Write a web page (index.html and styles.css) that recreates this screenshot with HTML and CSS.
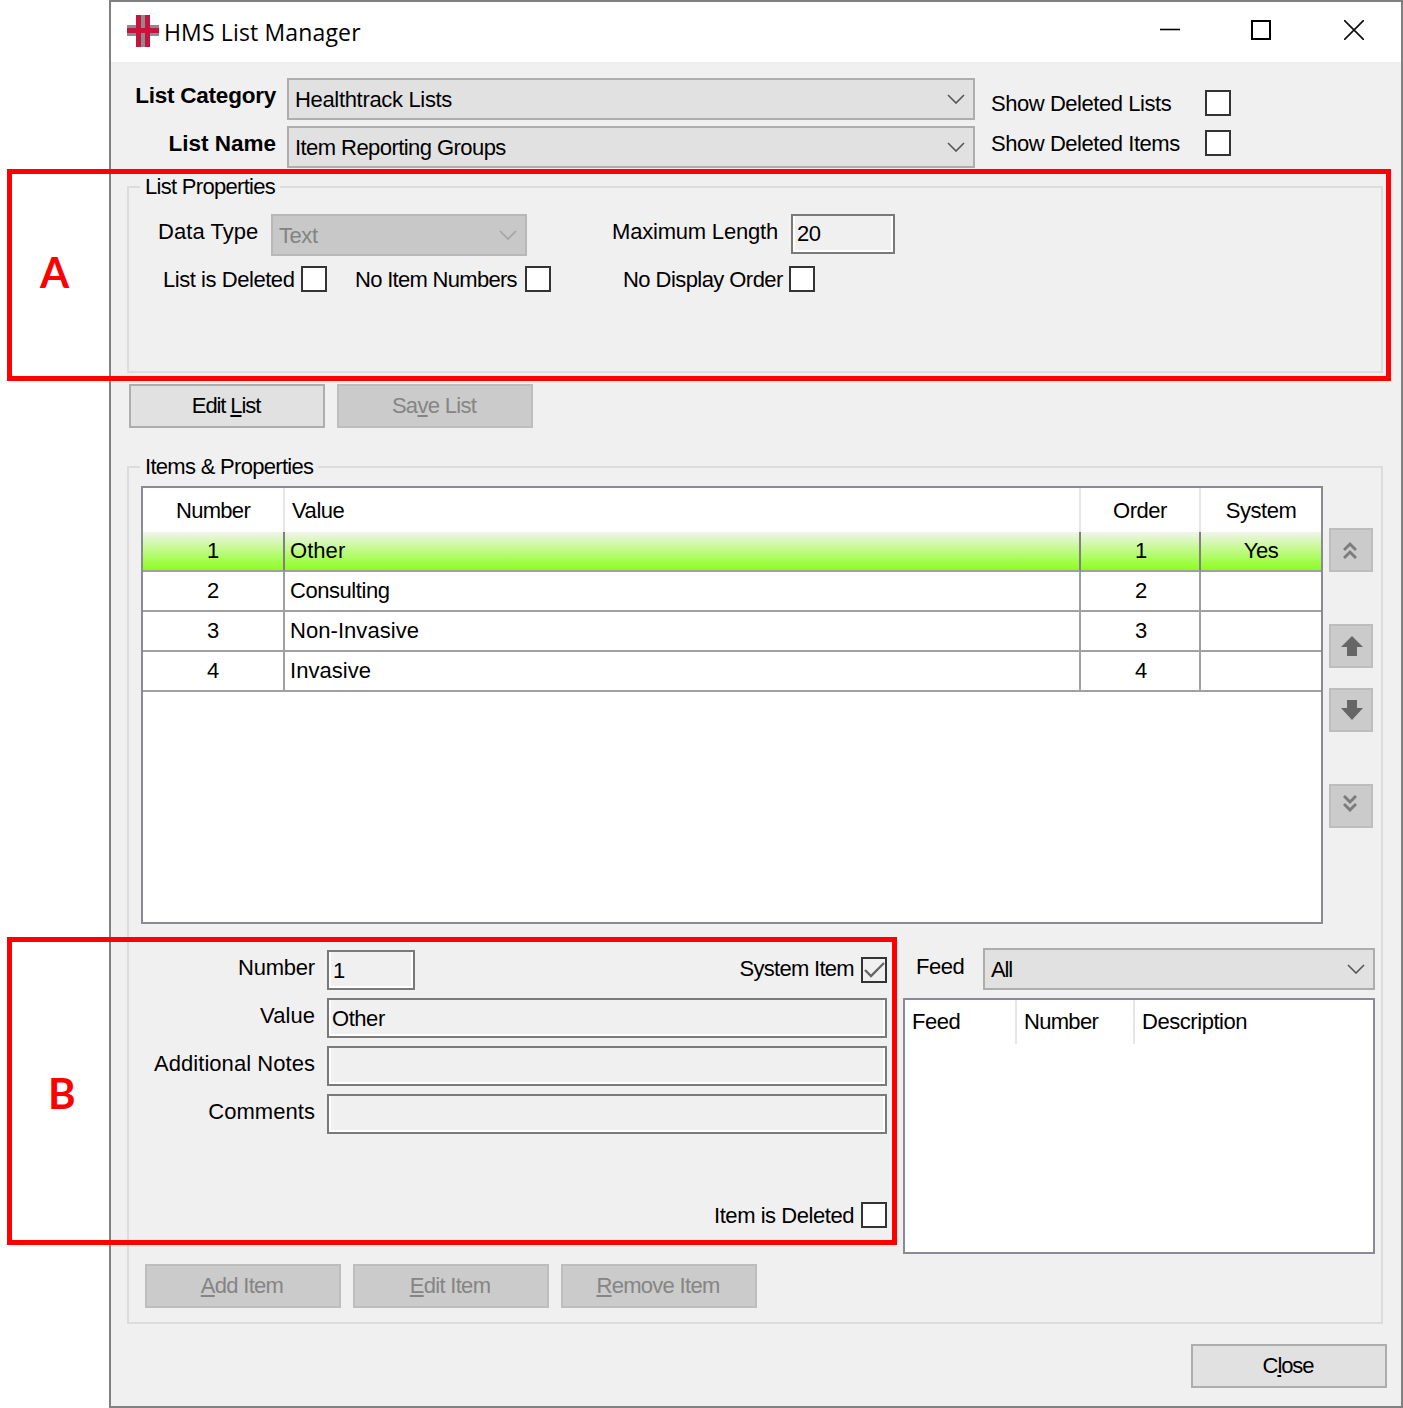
FILE: index.html
```html
<!DOCTYPE html>
<html lang="en">
<head>
<meta charset="utf-8">
<title>HMS List Manager</title>
<link rel="stylesheet" href="styles.css">
</head>
<body>
<div class="window">
  <header class="titlebar">
    <svg class="logo" width="32" height="32" viewBox="0 0 32 32"><path fill="#8c8c8c" d="M9 0h14v32H9zM0 10h32v11H0z"/><path fill="#c8143c" d="M9 0h5v32H9zM18 0h5v32h-5zM0 13h32v5H0z"/></svg>
    <span class="title">HMS List Manager</span>
    <div class="winctl">
      <svg width="20" height="20" viewBox="0 0 20 20"><path d="M0 9.5h20" stroke="#000" stroke-width="1.6" fill="none"/></svg>
      <svg width="20" height="20" viewBox="0 0 20 20"><path d="M1 1h18v18H1z" stroke="#000" stroke-width="2" fill="none"/></svg>
      <svg class="wc-close" width="20" height="20" viewBox="0 0 20 20"><path d="M0 0l20 20M20 0L0 20" stroke="#111" stroke-width="1.7" fill="none"/></svg>
    </div>
  </header>
  <main class="content">
    <section class="top">
      <div class="selectors">
        <label class="lbl-bold">List Category</label>
        <div class="combo"><span class="ls-soft">Healthtrack Lists</span><svg class="chev" width="18" height="10" viewBox="0 0 18 10"><path d="M1 1l8 8 8-8" fill="none" stroke="#555" stroke-width="1.6"/></svg></div>
        <label class="lbl-bold lbl-name">List Name</label>
        <div class="combo"><span class="ls-snug">Item Reporting Groups</span><svg class="chev" width="18" height="10" viewBox="0 0 18 10"><path d="M1 1l8 8 8-8" fill="none" stroke="#555" stroke-width="1.6"/></svg></div>
      </div>
      <div class="showopts">
        <div class="showrow"><span>Show Deleted Lists</span><i class="check"></i></div>
        <div class="showrow"><span>Show Deleted Items</span><i class="check"></i></div>
      </div>
    </section>

    <section class="group group-list">
      <span class="legend ls-tight">List Properties</span>
      <div class="prop-row">
        <span class="w-type ls-wide">Data Type</span>
        <div class="combo combo-off"><span>Text</span><svg class="chev" width="18" height="10" viewBox="0 0 18 10"><path d="M1 1l8 8 8-8" fill="none" stroke="#a4a4a4" stroke-width="1.6"/></svg></div>
        <span class="w-max ls-mid">Maximum Length</span>
        <div class="input input-max">20</div>
      </div>
      <div class="prop-row prop-row2">
        <span class="w-del">List is Deleted</span><i class="check"></i>
        <span class="w-noitem ls-tight">No Item Numbers</span><i class="check"></i>
        <span class="w-noorder ls-snug">No Display Order</span><i class="check"></i>
      </div>
    </section>

    <div class="btnrow btnrow-list">
      <button class="btn ls-xtight" type="button">Edit <u>L</u>ist</button>
      <button class="btn btn-off ls-tight" type="button">Sa<u>v</u>e List</button>
    </div>

    <section class="group group-items">
      <span class="legend ls-tight">Items &amp; Properties</span>
      <div class="grid-area">
        <div class="tablebox">
          <table class="items">
            <colgroup><col class="c1"><col class="c2"><col class="c3"><col class="c4"></colgroup>
            <thead><tr><th class="ls-tight">Number</th><th class="left">Value</th><th>Order</th><th>System</th></tr></thead>
            <tbody>
              <tr class="sel"><td>1</td><td class="left ls-wide">Other</td><td>1</td><td>Yes</td></tr>
              <tr><td>2</td><td class="left">Consulting</td><td>2</td><td></td></tr>
              <tr><td>3</td><td class="left ls-wide">Non-Invasive</td><td>3</td><td></td></tr>
              <tr><td>4</td><td class="left ls-wide">Invasive</td><td>4</td><td></td></tr>
            </tbody>
          </table>
        </div>
        <div class="movers">
          <button class="mv mv-chev" type="button"><svg width="14" height="18" viewBox="0 0 14 18"><path d="M1 9l6-6 6 6M1 17l6-6 6 6" fill="none" stroke="#7c7c7c" stroke-width="3"/></svg></button>
          <button class="mv mv-up" type="button"><svg width="22" height="20" viewBox="0 0 22 20"><path fill="#666" d="M11 0L22 11H16V20H6V11H0z"/></svg></button>
          <button class="mv mv-down" type="button"><svg width="22" height="20" viewBox="0 0 22 20"><path fill="#666" d="M6 0H16V8H22L11 20 0 8H6z"/></svg></button>
          <button class="mv mv-chev mv-bottom" type="button"><svg width="14" height="18" viewBox="0 0 14 18"><path d="M1 1l6 6 6-6M1 9l6 6 6-6" fill="none" stroke="#7c7c7c" stroke-width="3"/></svg></button>
        </div>
      </div>

      <div class="lower">
        <div class="itemform">
          <span class="flabel ls-mid">Number</span>
          <div class="numrow">
            <div class="input input-num">1</div>
            <div class="chkrow"><span class="ls-tight">System Item</span><i class="check check-on"><svg width="22" height="22" viewBox="0 0 22 22"><path d="M2 11l6 6L21 4" fill="none" stroke="#666" stroke-width="2.4"/></svg></i></div>
          </div>
          <span class="flabel ls-wide">Value</span>
          <div class="input input-value">Other</div>
          <span class="flabel ls-wide">Additional Notes</span>
          <div class="input"></div>
          <span class="flabel ls-wide">Comments</span>
          <div class="input"></div>
          <div class="chkrow chkrow-del"><span>Item is Deleted</span><i class="check"></i></div>
        </div>
        <div class="feed">
          <div class="feedrow"><span>Feed</span><div class="combo combo-feed"><span class="ls-xtight">All</span><svg class="chev" width="18" height="10" viewBox="0 0 18 10"><path d="M1 1l8 8 8-8" fill="none" stroke="#555" stroke-width="1.6"/></svg></div></div>
          <div class="feedlist">
            <div class="feedhead"><span class="fh1">Feed</span><span class="fh2 ls-tight">Number</span><span class="fh3">Description</span></div>
          </div>
        </div>
      </div>

      <div class="btnrow btnrow-items">
        <button class="btn btn-off ls-tight" type="button"><u>A</u>dd Item</button>
        <button class="btn btn-off ls-tight" type="button"><u>E</u>dit Item</button>
        <button class="btn btn-off ls-tight" type="button"><u>R</u>emove Item</button>
      </div>
    </section>

    <button class="btn btn-close ls-xtight" type="button">C<u>l</u>ose</button>
  </main>
</div>
<div class="annot annot-a"></div>
<div class="annot annot-b"></div>
<span class="annot-letter letter-a">A</span>
<span class="annot-letter letter-b">B</span>
</body>
</html>
```

FILE: styles.css
```css
* { box-sizing: border-box; }
html, body { margin: 0; padding: 0; background: #fff; }
body {
  position: relative;
  width: 1403px;
  height: 1408px;
  padding-left: 109px;
  overflow: hidden;
  font: 22px/26px "Liberation Sans", Arial, sans-serif;
  letter-spacing: -.45px;
  color: #000;
}
.ls-wide { letter-spacing: .05px; }
.ls-mid { letter-spacing: -.2px; }
.ls-soft { letter-spacing: -.33px; }
.ls-snug { letter-spacing: -.56px; }
.ls-tight { letter-spacing: -.7px; }
.ls-xtight { letter-spacing: -1.1px; }

.window {
  width: 1294px;
  height: 1408px;
  border: 2px solid #808080;
  background: #f0f0f0;
  display: flex;
  flex-direction: column;
}
.titlebar {
  height: 60px;
  background: #fff;
  display: flex;
  align-items: center;
  padding: 0 37px 0 16px;
  flex: none;
}
.logo { margin: 0 5px 0 0; position: relative; top: -1px; }
.title { font: 23px/30px "Open Sans", "Noto Sans", sans-serif; letter-spacing: .15px; }
.winctl { margin-left: auto; display: flex; gap: 71px; margin-bottom: 4px; }
.wc-close { margin-left: 2px; }
.content { flex: 1; display: flex; flex-direction: column; padding: 16px 14px 0 16px; }

.top { display: flex; height: 90px; }
.selectors { display: grid; grid-template-columns: 149px 688px; column-gap: 11px; row-gap: 6px; grid-auto-rows: 42px; }
.lbl-bold { font-weight: 700; font-size: 22.5px; text-align: right; padding-bottom: 6px; align-self: center; white-space: nowrap; letter-spacing: -.23px; }
.lbl-name { letter-spacing: 0; }
.showopts { margin: 12px 0 0 16px; display: flex; flex-direction: column; gap: 14px; }
.showrow { display: flex; align-items: center; width: 240px; height: 26px; justify-content: space-between; }
.showrow span { white-space: nowrap; padding-top: 2px; }

.combo {
  height: 42px;
  border: 2px solid #adadad;
  background: #e1e1e1;
  display: flex;
  align-items: center;
  justify-content: space-between;
  padding: 2px 8px 0 6px;
  white-space: nowrap;
}
.chev { margin-top: -2px; }
.combo-off { width: 256px; background: #c8c8c8; border-color: #b8b8b8; color: #838383; margin-right: 85px; }
.combo-feed { width: 392px; height: 42px; }
.check {
  display: block;
  flex: none;
  width: 26px;
  height: 26px;
  border: 2px solid #333;
  background: #fff;
}
.check-on { background: #f0f0f0; padding: 0; }
.check-on svg { display: block; }

.group { position: relative; width: 1256px; border: 2px solid #dcdcdc; flex: none; }
.legend { position: absolute; left: 11px; top: -14px; padding: 0 5px; background: #f0f0f0; white-space: nowrap; }
.group-list { height: 187px; margin-top: 18px; padding: 26px 0 0 29px; }
.prop-row { display: flex; align-items: center; height: 42px; white-space: nowrap; }
.prop-row > span { display: block; padding-bottom: 6px; }
.w-type { width: 113px; }
.w-max { width: 179px; }
.prop-row2 { height: 26px; margin-top: 10px; }
.prop-row2 > span { padding-bottom: 0; padding-top: 1px; }
.w-del { width: 138px; margin-left: 5px; }
.w-noitem { width: 170px; margin-left: 28px; }
.w-noorder { width: 166px; margin-left: 72px; }

.input {
  height: 40px;
  border: 2px solid #7a7a7a;
  background: #f0f0f0;
  box-shadow: inset 2px 0 0 #fff, inset -2px 0 0 #fff, inset 0 -2px 0 #fff;
  padding: 2px 3px 0;
  display: flex;
  align-items: center;
}
.input-max { width: 104px; padding: 0 4px; margin-bottom: 2px; }
.input-num { width: 88px; padding-left: 4px; }

.btnrow { display: flex; gap: 12px; }
.btnrow-list { margin: 11px 0 0 2px; }
.btn {
  width: 196px;
  height: 44px;
  border: 2px solid #adadad;
  background: #e1e1e1;
  font: inherit;
  color: #000;
  padding: 0 2px 0 0;
  flex: none;
}
.btn-off { background: #cbcbcb; border-color: #bdbdbd; color: #858585; }
.btn-close { align-self: flex-end; margin-top: 20px; }
.btn.ls-tight { letter-spacing: -.7px; }
.btn.ls-xtight { letter-spacing: -1.1px; }

.group-items { height: 858px; margin-top: 38px; padding: 18px 0 0 12px; }
.grid-area { display: flex; gap: 6px; height: 438px; }
.tablebox { width: 1182px; height: 438px; border: 2px solid #8a8a94; background: #fff; flex: none; }
.items { width: 1178px; table-layout: fixed; border-collapse: separate; border-spacing: 0; }
.c1 { width: 142px; }
.c2 { width: 796px; }
.c3 { width: 120px; }
.c4 { width: 120px; }
.items th {
  height: 44px;
  padding: 2px 0 0;
  font-weight: 400;
  border-right: 2px solid #e6e6e6;
  text-align: center;
}
.items th:last-child, .items td:last-child { border-right: 0; }
.items th.left { text-align: left; padding-left: 7px; }
.items td {
  height: 40px;
  padding: 0 0 1px;
  text-align: center;
  border-right: 2px solid #a0a0a0;
  border-bottom: 2px solid #a0a0a0;
}
.items td:nth-child(3) { padding-left: 2px; }
.items td.left { text-align: left; padding-left: 5px; }
.items .sel td { background: linear-gradient(#f0f5ea, #8cff1e); border-right-color: #808080; }
.items .sel td:last-child { border-right: 0; }

.movers { display: flex; flex-direction: column; padding-top: 42px; }
.mv {
  width: 44px;
  height: 44px;
  border: 2px solid #bdbdbd;
  background: #cbcbcb;
  padding: 0;
  display: flex;
  align-items: center;
  justify-content: center;
}
.mv-chev svg { margin-right: 2px; }
.mv-up { margin-top: 52px; }
.mv-down { margin-top: 20px; }
.mv-up svg, .mv-down svg { margin-left: 2px; }
.mv-bottom { margin-top: 52px; }
.mv-bottom svg { margin-bottom: 4px; }
.mv svg { display: block; }

.lower { display: flex; height: 330px; }
.itemform {
  display: grid;
  grid-template-columns: 174px 560px;
  column-gap: 12px;
  grid-auto-rows: 40px;
  row-gap: 8px;
  padding-top: 26px;
  width: 746px;
  align-content: start;
}
.flabel { text-align: right; align-self: center; padding-bottom: 4px; white-space: nowrap; }
.numrow { display: flex; justify-content: space-between; align-items: center; }
.chkrow { display: flex; align-items: center; gap: 7px; white-space: nowrap; }
.chkrow span { padding-bottom: 2px; }
.chkrow-del { grid-column: 2; justify-content: flex-end; height: 26px; margin-top: 60px; }
.chkrow-del span { padding-bottom: 0; padding-top: 2px; }

.feed { margin-left: 16px; width: 472px; padding-top: 24px; flex: none; }
.feedrow { display: flex; align-items: center; justify-content: space-between; padding-left: 13px; height: 42px; }
.feedrow > span { padding-bottom: 4px; }
.feedlist { margin-top: 8px; height: 256px; border: 2px solid #8a8a94; background: #fff; }
.feedhead { display: flex; height: 44px; align-items: center; }
.feedhead span { height: 44px; line-height: 44px; padding-left: 7px; border-right: 2px solid #e6e6e6; }
.fh1 { width: 112px; }
.fh2 { width: 118px; }
.feedhead .fh3 { border-right: 0; }

.btnrow-items { margin: 10px 0 0 4px; }

.annot { position: absolute; border: 5px solid #f00; pointer-events: none; }
.annot-a { left: 7px; top: 169px; width: 1384px; height: 212px; }
.annot-b { left: 7px; top: 937px; width: 890px; height: 308px; }
.annot-letter { position: absolute; font: 700 42px/50px Lato, sans-serif; letter-spacing: 0; color: #f00; }
.letter-a { left: 40px; top: 247px; }
.letter-b { left: 48px; top: 1068px; }
```
